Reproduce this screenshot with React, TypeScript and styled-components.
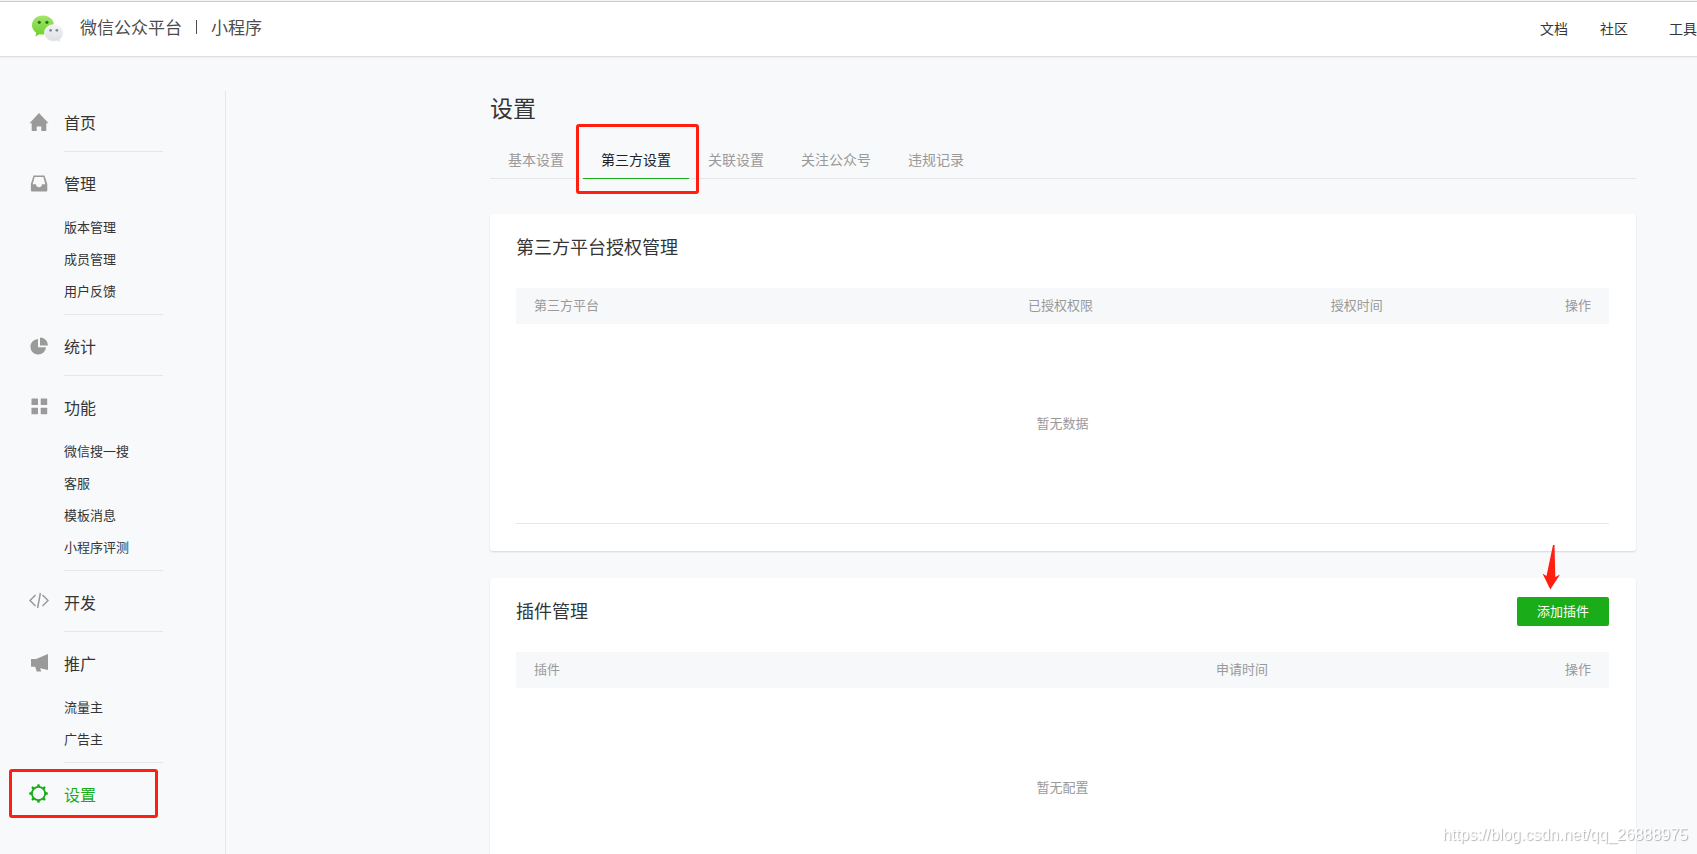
import React from 'react';
import styled, { createGlobalStyle, css } from 'styled-components';

const GlobalStyle = createGlobalStyle`
  * { box-sizing: border-box; }
  body {
    margin: 0;
    background: #f8f9fb;
    color: #353535;
    font-family: "Noto Sans CJK SC", "Liberation Sans", sans-serif;
    font-size: 14px;
    overflow-x: hidden;
  }
  h1, h2, ul, p { margin: 0; padding: 0; font-weight: 400; }
  ul { list-style: none; }
  a { color: inherit; text-decoration: none; }
`;

const GREEN = '#1aad19';
const RED = '#ff1e10';

const Page = styled.div`
  display: flex;
  flex-direction: column;
  min-height: 100vh;
`;

const Header = styled.header`
  display: flex;
  align-items: center;
  justify-content: space-between;
  height: 57px;
  padding-left: 31px;
  background: #fff;
  border-top: 1px solid #f4f4f4;
  border-bottom: 1px solid #dfdfe1;
  box-shadow: inset 0 1px #cccccc, 0 1px 1px rgba(0, 0, 0, 0.04);
`;

const Brand = styled.a`
  display: flex;
  align-items: center;
  gap: 16px;
  color: #4c4c4c;
  font-size: 17px;
  line-height: 24px;
`;

const BrandText = styled.span`
  display: flex;
  align-items: center;
  gap: 14px;
  padding-bottom: 3px;
`;

const BrandRule = styled.span`
  width: 1px;
  height: 14px;
  background: #4c4c4c;
`;

const TopNav = styled.nav`
  display: flex;
  gap: 32px;
  padding-bottom: 2px;
  line-height: 20px;

  a:last-child { margin-left: 9px; }
`;

const Body = styled.div`
  display: flex;
  flex: 1;
  padding-top: 34px;
`;

const Sidebar = styled.nav`
  flex: none;
  width: 226px;
  padding-left: 28px;
  border-right: 1px solid #e4e6e8;
`;

const Group = styled.section`
  position: relative;
  padding-top: 19px;
`;

const GroupLink = styled.a<{ $active?: boolean }>`
  display: flex;
  align-items: center;
  gap: 14px;
  height: 24px;
  font-size: 16px;
  line-height: 24px;
  color: ${p => (p.$active ? GREEN : '#353535')};

  svg { flex: none; color: ${p => (p.$active ? GREEN : '#9a9a9a')}; }
`;

const SubList = styled.ul`
  padding-top: 16px;
  margin-left: 36px;
`;

const SubItem = styled.li`
  font-size: 13px;
  line-height: 32px;
`;

const Divider = styled.hr<{ $tight?: boolean }>`
  width: 99px;
  height: 1px;
  margin: ${p => (p.$tight ? 7 : 17)}px 0 0 36px;
  border: 0;
  background: #e4e6e8;
`;

const Mark = styled.span<{ $kind: 'tab' | 'menu' }>`
  position: absolute;
  border: 3px solid ${RED};
  border-radius: 3px;
  pointer-events: none;
  ${p =>
    p.$kind === 'tab'
      ? css`inset: -18px -10px -16px -7px;`
      : css`left: -19px; top: 6px; width: 149px; height: 49px;`}
`;

const Main = styled.main`
  flex: 1;
  min-width: 0;
  padding: 0 61px 40px 264px;
`;

const PageTitle = styled.h1`
  font-size: 23px;
  line-height: 32px;
`;

const Tabs = styled.ul`
  display: flex;
  gap: 1px;
  margin: 19px 0 35px;
  border-bottom: 1px solid #e4e6e8;
`;

const Tab = styled.li<{ $active?: boolean }>`
  position: relative;
  padding: 0 18px 2px;
  margin-bottom: -1px;
  line-height: 34px;
  color: ${p => (p.$active ? '#222' : '#9a9a9a')};
  border-bottom: 1px solid ${p => (p.$active ? GREEN : 'transparent')};
`;

const Card = styled.section`
  position: relative;
  margin-bottom: 27px;
  padding: 19px 27px 27px 26px;
  background: #fff;
  border-radius: 3px;
  box-shadow: 0 1px 2px rgba(0, 0, 0, 0.14);
`;

const CardHead = styled.div`
  display: flex;
  align-items: flex-start;
  justify-content: space-between;
  height: 29px;
  margin-bottom: 26px;
`;

const CardTitle = styled.h2`
  font-size: 18px;
  line-height: 26px;
`;

const AddButton = styled.button`
  width: 92px;
  height: 29px;
  padding: 0 0 2px;
  border: 0;
  border-radius: 2px;
  background: ${GREEN};
  color: #fff;
  font: inherit;
  font-size: 13px;
  line-height: 26px;
`;

const Arrow = styled.svg`
  position: absolute;
  top: -34px;
  right: 75px;
`;

const Table = styled.table`
  width: 100%;
  border-collapse: separate;
  border-spacing: 0;
  table-layout: fixed;
  color: #9a9a9a;
  font-size: 13px;
`;

const HeadCell = styled.th<{ $width?: string }>`
  width: ${p => p.$width ?? 'auto'};
  height: 36px;
  padding: 0 18px 3px;
  background: #f6f8f9;
  font-weight: 400;
  text-align: left;

  &:last-child { text-align: right; }
`;

const EmptyCell = styled.td`
  height: 200px;
  padding: 0 0 3px;
  border-bottom: 1px solid #e4e6e8;
  text-align: center;
`;

const Watermark = styled.p`
  position: fixed;
  right: 9px;
  bottom: 9px;
  color: #fff;
  font-family: "Liberation Sans", sans-serif;
  font-size: 16px;
  line-height: 20px;
  text-shadow: 1px 1px 1px rgba(0, 0, 0, 0.3);
`;

const Logo = () => (
  <svg width="33" height="28" viewBox="0 0 33 28" aria-hidden="true">
    <defs>
      <linearGradient id="green" x1="0" y1="0" x2="0" y2="1">
        <stop offset="0" stopColor="#a2e56b" />
        <stop offset="1" stopColor="#6fcf2f" />
      </linearGradient>
      <linearGradient id="grey" x1="0" y1="0" x2="0" y2="1">
        <stop offset="0" stopColor="#f3f4f8" />
        <stop offset="1" stopColor="#dcdde2" />
      </linearGradient>
    </defs>
    <path fill="url(#green)" d="M12 0.500C5.700 0.500 1 4.700 1 10.300c0 3.200 1.600 5.700 4.200 7.400L4.400 21.500l4.200-2.300c1.100.3 2.200.4 3.400.4 6.300 0 11-4 11-9.300S18.300 0.500 12 0.500z" />
    <circle cx="8.300" cy="7.300" r="1.600" fill="#1f7a1c" />
    <circle cx="15.900" cy="7.300" r="1.600" fill="#1f7a1c" />
    <path fill="url(#grey)" stroke="#fff" strokeWidth=".5" d="M22.800 9.600c-5.300 0-9.400 3.700-9.400 8.300s4.100 8.300 9.400 8.300c1.100 0 2.200-.2 3.200-.5l3.400 1.700-.7-3c2.100-1.500 3.500-3.800 3.500-6.500 0-4.600-4.100-8.300-9.400-8.300z" />
    <circle cx="19.600" cy="15.300" r="1.400" fill="#85888d" />
    <circle cx="25.900" cy="15.300" r="1.400" fill="#85888d" />
  </svg>
);

const icons: Record<string, React.ReactNode> = {
  home: <path d="M11 1 1.500 11.200H3.700V19h5v-4.500h4.600V19h5v-7.800h2.200z" />,
  tray: <path fillRule="evenodd" d="M5.500 2.500h11L19.300 11v6.500a1 1 0 0 1-1 1H3.900a1 1 0 0 1-1-1V11zM6.600 4 4.700 11.300H8c0 4 6 4 6 0h3.300L15.400 4z" />,
  pie: (
    <>
      <path d="M10 3v8.300h8A7.800 7.800 0 1 1 10 3z" />
      <path d="M12 1.400A8 8 0 0 1 20 9.400h-8z" />
    </>
  ),
  grid: (
    <>
      <rect x="3.500" y="1.500" width="6.500" height="6.500" rx=".5" />
      <rect x="12.700" y="1.500" width="6.500" height="6.500" rx=".5" />
      <rect x="3.500" y="10.700" width="6.500" height="6.500" rx=".5" />
      <rect x="12.700" y="10.700" width="6.500" height="6.500" rx=".5" />
    </>
  ),
  code: <path fill="none" stroke="currentColor" strokeWidth="1.500" d="M7.500 3 2 8.500l5.500 5.500M14.500 3 20 8.500l-5.500 5.500M12.400 1 9.600 16" />,
  horn: <path d="M20 1v16l-8-1.700 1.300 3.200H8.700L7.200 13.800H3V6h5z" />,
  gear: (
    <>
      <circle cx="10.500" cy="9.500" r="6.600" fill="none" stroke="currentColor" strokeWidth="1.800" />
      {[0, 45, 90, 135, 180, 225, 270, 315].map(a => (
        <path key={a} d="M8.800 2.900 9.600.2h1.800l.8 2.700z" transform={`rotate(${a} 10.500 9.500)`} />
      ))}
    </>
  ),
};

const Icon = ({ name }: { name: string }) => (
  <svg width="22" height="22" viewBox="0 0 22 20" fill="currentColor" aria-hidden="true">
    {icons[name]}
  </svg>
);

type MenuGroup = { icon: string; title: string; items?: string[]; active?: boolean };

const menu: MenuGroup[] = [
  { icon: 'home', title: '首页' },
  { icon: 'tray', title: '管理', items: ['版本管理', '成员管理', '用户反馈'] },
  { icon: 'pie', title: '统计' },
  { icon: 'grid', title: '功能', items: ['微信搜一搜', '客服', '模板消息', '小程序评测'] },
  { icon: 'code', title: '开发' },
  { icon: 'horn', title: '推广', items: ['流量主', '广告主'] },
  { icon: 'gear', title: '设置', active: true },
];

const tabs = ['基本设置', '第三方设置', '关联设置', '关注公众号', '违规记录'];

type Column = { label: string; width?: string };

const DataTable = ({ columns, empty }: { columns: Column[]; empty: string }) => (
  <Table>
    <thead>
      <tr>
        {columns.map(c => (
          <HeadCell key={c.label} scope="col" $width={c.width}>{c.label}</HeadCell>
        ))}
      </tr>
    </thead>
    <tbody>
      <tr><EmptyCell colSpan={columns.length}>{empty}</EmptyCell></tr>
    </tbody>
  </Table>
);

export default function App() {
  return (
    <Page>
      <GlobalStyle />
      <Header>
        <Brand href="#">
          <Logo />
          <BrandText>
            <span>微信公众平台</span>
            <BrandRule />
            <span>小程序</span>
          </BrandText>
        </Brand>
        <TopNav>
          <a href="#docs">文档</a>
          <a href="#community">社区</a>
          <a href="#tools">工具</a>
        </TopNav>
      </Header>
      <Body>
        <Sidebar>
          {menu.map(g => (
            <Group key={g.title}>
              <GroupLink href="#" $active={g.active}>
                <Icon name={g.icon} />
                {g.title}
              </GroupLink>
              {g.items && (
                <SubList>
                  {g.items.map(item => (
                    <SubItem key={item}><a href="#">{item}</a></SubItem>
                  ))}
                </SubList>
              )}
              {g.active ? <Mark $kind="menu" /> : <Divider $tight={!!g.items} />}
            </Group>
          ))}
        </Sidebar>
        <Main>
          <PageTitle>设置</PageTitle>
          <Tabs>
            {tabs.map((t, i) => (
              <Tab key={t} $active={i === 1}>
                <a href="#">{t}</a>
                {i === 1 && <Mark $kind="tab" />}
              </Tab>
            ))}
          </Tabs>
          <Card>
            <CardHead><CardTitle>第三方平台授权管理</CardTitle></CardHead>
            <DataTable
              columns={[
                { label: '第三方平台', width: '45.2%' },
                { label: '已授权权限', width: '27.7%' },
                { label: '授权时间' },
                { label: '操作' },
              ]}
              empty="暂无数据"
            />
          </Card>
          <Card>
            <CardHead>
              <CardTitle>插件管理</CardTitle>
              <AddButton type="button">添加插件</AddButton>
            </CardHead>
            <Arrow width="20" height="46" viewBox="0 0 20 46" aria-hidden="true">
              <path fill={RED} d="M12 1h1.500l.8 32 4.700-2.500L9.300 45.500 1.500 29.500 5.500 32z" />
            </Arrow>
            <DataTable
              columns={[
                { label: '插件', width: '62.4%' },
                { label: '申请时间' },
                { label: '操作' },
              ]}
              empty="暂无配置"
            />
          </Card>
        </Main>
      </Body>
      <Watermark>https://blog.csdn.net/qq_26888975</Watermark>
    </Page>
  );
}
